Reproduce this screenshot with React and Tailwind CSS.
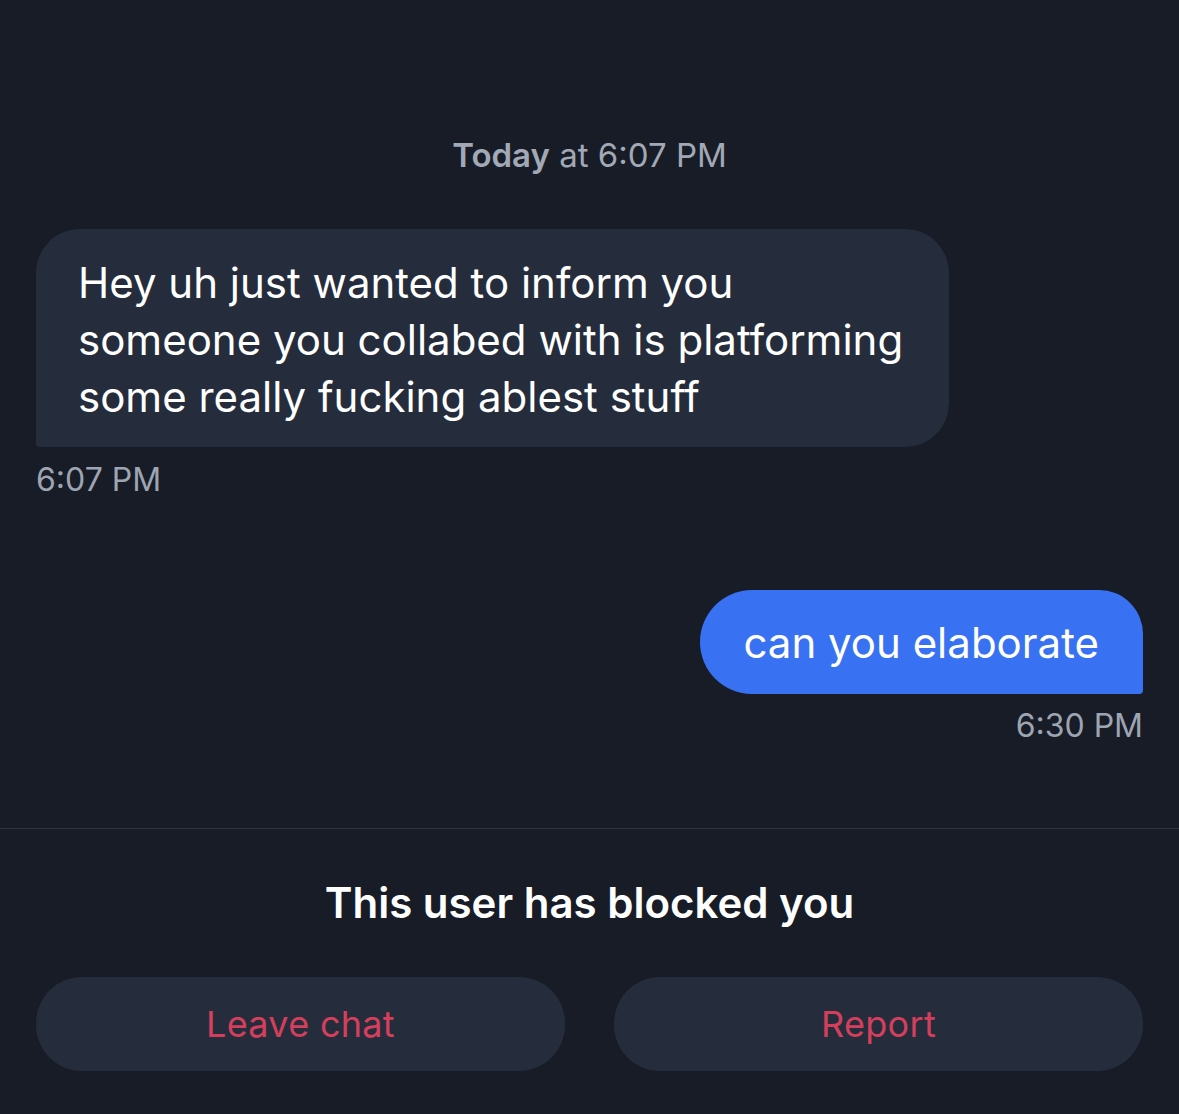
import React from "react";

const font = { fontFamily: "Inter, 'Noto Sans', sans-serif" };

const Timestamp = ({ children, className }) => (
  <div className={"text-[32px] leading-[36px] text-[#9ea5b2] " + (className || "")}>
    {children}
  </div>
);

export default function App() {
  return (
    <div style={font} className="min-h-[1114px] w-full bg-[#171c26] flex flex-col">
      <div className="px-[36px] pt-[137px]">
        <div className="text-center text-[33px] leading-[36px] text-[#a2a9b6]">
          <span className="font-semibold">Today</span> at 6:07 PM
        </div>

        <div className="mt-[56px] flex flex-col items-start">
          <div className="w-[913px] bg-[#252d3d] rounded-tl-[44px] rounded-tr-[44px] rounded-br-[44px] rounded-bl-[4px] pl-[42px] pr-[36px] pt-[25px] pb-[22px] text-[42px] leading-[57px] text-white">
            Hey uh just wanted to inform you someone you collabed with is platforming some really fucking ablest stuff
          </div>
          <Timestamp className="mt-[15px]">6:07 PM</Timestamp>
        </div>

        <div className="mt-[92px] flex flex-col items-end">
          <div className="h-[104px] flex items-center bg-[#3872f2] rounded-tl-[52px] rounded-bl-[52px] rounded-tr-[44px] rounded-br-[4px] pl-[43px] pr-[44px] text-[42px] text-white">
            can you elaborate
          </div>
          <Timestamp className="mt-[14px]">6:30 PM</Timestamp>
        </div>
      </div>

      <div className="mt-[84px] border-t border-[#2d3441]" />

      <div className="px-[36px] pt-[51px] pb-[43px]">
        <div className="text-center text-[42px] leading-[46px] font-semibold text-white">
          This user has blocked you
        </div>
        <div className="mt-[51px] grid grid-cols-2 gap-[49px]">
          <button className="h-[94px] rounded-[46px] bg-[#252d3d] text-[36px] tracking-[0.3px] text-[#d53f5b]">
            Leave chat
          </button>
          <button className="h-[94px] rounded-[46px] bg-[#252d3d] text-[36px] tracking-[0.3px] text-[#d53f5b]">
            Report
          </button>
        </div>
      </div>
    </div>
  );
}
